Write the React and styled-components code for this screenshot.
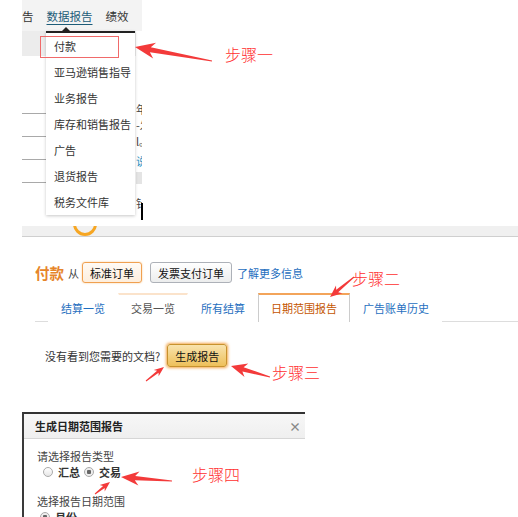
import React from 'react'
import styled, { createGlobalStyle } from 'styled-components'

const GlobalStyle = createGlobalStyle`
  html, body { margin: 0; padding: 0; background: #fff; }
  body {
    font-family: "Noto Sans CJK SC", "Noto Sans", "Liberation Sans", sans-serif;
    font-size: 11px;
    color: #333;
  }
`

const Page = styled.div`
  position: relative;
  width: 518px;
  height: 517px;
  overflow: hidden;
  background: #fff;
`

/* ---------- shot 1 : nav + dropdown ---------- */

const Shot1 = styled.div`
  position: relative;
  margin-left: 22px;
  width: 120px;
  height: 226px;
  display: flex;
  flex-direction: column;
`

const TopNav = styled.div`
  height: 31px;
  background: #f3f3f3;
  display: flex;
  align-items: center;
  gap: 13px;
  font-size: 11.5px;
  line-height: 16px;
  white-space: nowrap;
`

const NavItem = styled.span`
  color: ${p => (p.$active ? '#1d5c78' : '#333')};
  text-decoration: ${p => (p.$active ? 'underline' : 'none')};
  text-underline-offset: 3px;
`

const BackBody = styled.div`
  flex: 1;
  display: grid;
  grid-template-columns: 1fr 6px;
`

const BackLeft = styled.div`
  display: flex;
  flex-direction: column;
`

const GrayBand = styled.div`
  height: 25px;
  background: #ececec;
`

const Bullet = styled.div`
  height: 35px;
  padding-left: 21px;
  line-height: 30px;
  font-size: 10px;
  color: #444;
`

const BackRow = styled.div`
  height: 22px;
  border-bottom: 1px solid #a9a9a9;
  width: 24px;
`

const BackRight = styled.div`
  display: flex;
  flex-direction: column;
  padding-top: 70px;
  font-size: 11px;
  line-height: 16px;
  overflow: hidden;
  white-space: nowrap;
  color: #444;
`

const Frag = styled.span`
  height: ${p => p.$h || 16}px;
  color: ${p => p.$c || '#444'};
  background: ${p => p.$bg || 'transparent'};
  margin-top: ${p => p.$mt || 0}px;
`

const Cursor = styled.div`
  position: absolute;
  left: 119px;
  top: 203px;
  width: 2px;
  height: 17px;
  background: #000;
`

const Dropdown = styled.ul`
  position: absolute;
  left: 24px;
  top: 31px;
  width: 89px;
  margin: 0;
  padding: 0;
  list-style: none;
  background: #fff;
  border-top: 2px solid #222;
  box-shadow: 0 1px 3px rgba(0, 0, 0, 0.22);

  &::before {
    content: '';
    position: absolute;
    left: 16px;
    top: -6px;
    border: 4px solid transparent;
    border-bottom-color: #222;
    border-top: 0;
  }
`

const MenuItem = styled.li`
  height: 26px;
  line-height: 26px;
  padding-left: 8px;
  font-size: 11px;
  color: #333;
  white-space: nowrap;
`

const RedBox = styled.div`
  position: absolute;
  left: 18px;
  top: 36px;
  width: 77px;
  height: 20px;
  border: 1px solid #f06a6a;
`

/* ---------- shot 2 : payments header + tabs ---------- */

const Shot2 = styled.div`
  margin-left: 22px;
  display: flex;
  flex-direction: column;
`

const TopStrip = styled.div`
  position: relative;
  height: 10px;
  background: #f0f0f0;
  border-bottom: 1px solid #cfcfcf;
  overflow: hidden;
`

const Ring = styled.div`
  position: absolute;
  left: 51px;
  top: -14px;
  width: 18px;
  height: 18px;
  border: 3px solid #f6a623;
  border-radius: 50%;
`

const HeadRow = styled.div`
  display: flex;
  align-items: center;
  margin-top: 25px;
  padding-left: 13px;
  height: 21px;
  white-space: nowrap;
`

const Title = styled.span`
  font-size: 14.5px;
  font-weight: bold;
  color: #e6852a;
  margin-right: 4px;
`

const From = styled.span`
  font-size: 11px;
  color: #444;
  margin-right: 3px;
`

const OrderButton = styled.button`
  height: 21px;
  padding: 0 7px;
  margin-right: ${p => p.$mr || 0}px;
  font: inherit;
  font-size: 11px;
  color: #111;
  border-radius: 3px;
  border: 1px solid ${p => (p.$active ? '#f0a050' : '#adb1b8')};
  background: ${p => (p.$active ? 'linear-gradient(#fffaf4, #fdeedd)' : 'linear-gradient(#fff, #eceded)')};
  box-shadow: ${p => (p.$active ? '0 0 2px #f7c890' : 'none')};
  cursor: pointer;
`

const Link = styled.a`
  font-size: 11px;
  color: #1f6fc0;
  text-decoration: none;
`

const TabBar = styled.div`
  display: flex;
  margin-top: 12px;
  margin-left: 13px;
  padding-left: 13px;
  border-bottom: 1px solid #ddd;
`

const Tab = styled.div`
  height: 27px;
  line-height: 27px;
  padding: 0 12px;
  font-size: 11px;
  white-space: nowrap;
  color: ${p => (p.$active ? '#c45500' : p.$muted ? '#555' : '#1f6fc0')};
  border-top: 2px solid ${p => (p.$active ? '#f3a45a' : p.$hover ? '#fbe3cb' : 'transparent')};
  border-left: 1px solid ${p => (p.$active ? '#ccc' : 'transparent')};
  border-right: 1px solid ${p => (p.$active ? '#ccc' : 'transparent')};
  background: #fff;
  margin-bottom: -1px;
  margin-top: -2px;
`

/* ---------- shot 3 : generate report ---------- */

const Shot3 = styled.div`
  display: flex;
  align-items: center;
  gap: 7px;
  margin-top: 22px;
  padding-left: 45px;
  height: 23px;
`

const Hint = styled.span`
  font-size: 11px;
  color: #333;
`

const GenButton = styled.button`
  height: 23px;
  width: 60px;
  padding: 0;
  font: inherit;
  font-size: 11px;
  color: #111;
  border: 1px solid #c7922d;
  border-radius: 3px;
  background: linear-gradient(#f8e3ad, #eec05a);
  box-shadow: 0 0 3px 1px #f4a64a;
`

/* ---------- shot 4 : dialog ---------- */

const Dialog = styled.div`
  margin-top: 45px;
  margin-left: 22px;
  width: 281px;
  border-top: 2px solid #333;
  border-left: 2px solid #3a3a3a;
`

const DialogHead = styled.div`
  height: 24px;
  display: flex;
  align-items: center;
  justify-content: space-between;
  padding: 0 4px 0 11px;
  background: linear-gradient(#f7f7f7, #efefef);
  border-bottom: 1px solid #d6d6d6;
`

const DialogTitle = styled.span`
  font-size: 11px;
  font-weight: bold;
  color: #222;
`

const Close = styled.span`
  font-size: 12px;
  font-weight: bold;
  color: #888;
`

const DialogBody = styled.div`
  padding: 9px 0 0 13px;
  display: flex;
  flex-direction: column;
`

const Label = styled.div`
  font-size: 11px;
  line-height: 16px;
  color: #444;
  margin-top: ${p => p.$mt || 0}px;
`

const RadioRow = styled.div`
  display: flex;
  align-items: center;
  height: 16px;
  padding-left: 6px;
  font-size: 11px;
  font-weight: bold;
  color: #333;
`

const Radio = styled.span`
  width: 8px;
  height: 8px;
  border-radius: 50%;
  border: 1px solid #aaa;
  background: ${p => (p.$on ? 'radial-gradient(circle, #666 0 2px, #eee 2.5px)' : 'linear-gradient(#fff, #e6e6e6)')};
  margin-right: 5px;
  margin-left: ${p => p.$ml || 0}px;
`

/* ---------- annotations ---------- */

const Overlay = styled.svg`
  position: absolute;
  left: 0;
  top: 0;
  pointer-events: none;
`

const Note = styled.span`
  position: absolute;
  left: ${p => p.$x}px;
  top: ${p => p.$y}px;
  font-size: 16px;
  line-height: 18px;
  font-weight: 300;
  color: #ff2f2f;
  white-space: nowrap;
`

const arrowPoints = (tx, ty, sx, sy, head, hw) => {
  const dx = sx - tx
  const dy = sy - ty
  const len = Math.hypot(dx, dy)
  const ux = dx / len
  const uy = dy / len
  const p = (a, b) => `${(tx + ux * a - uy * b).toFixed(1)},${(ty + uy * a + ux * b).toFixed(1)}`
  const shaft = hw * 0.32
  return [p(0, 0), p(head, hw), p(head * 0.78, shaft), p(len, 0.5), p(len, -0.5), p(head * 0.78, -shaft), p(head, -hw)].join(' ')
}

const arrows = [
  [135, 47, 212, 61, 20, 8],
  [330, 297, 354, 277, 12, 5],
  [231, 366, 270, 377, 16, 7],
  [164, 367, 146, 381, 10, 4],
  [121, 477, 172, 481, 18, 7],
  [110, 482, 95, 494, 10, 4],
]

const menu = ['付款', '亚马逊销售指导', '业务报告', '库存和销售报告', '广告', '退货报告', '税务文件库']
const tabs = [
  { label: '结算一览' },
  { label: '交易一览', muted: true, hover: true },
  { label: '所有结算' },
  { label: '日期范围报告', active: true },
  { label: '广告账单历史' },
]

export default function App() {
  return (
    <Page>
      <GlobalStyle />

      <Shot1>
        <TopNav>
          <NavItem>告</NavItem>
          <NavItem $active>数据报告</NavItem>
          <NavItem>绩效</NavItem>
        </TopNav>
        <BackBody>
          <BackLeft>
            <GrayBand />
            <Bullet>•</Bullet>
            <BackRow />
            <BackRow />
            <BackRow />
            <BackRow />
          </BackLeft>
          <BackRight>
            <Frag>年</Frag>
            <Frag>-发</Frag>
            <Frag>l。</Frag>
            <Frag $c="#1f8fc0" $mt={4}>说</Frag>
            <Frag $bg="#e4e4e4" $h={12} $mt={3}> </Frag>
            <Frag $mt={11}>针</Frag>
          </BackRight>
        </BackBody>
        <Dropdown>
          {menu.map(m => (
            <MenuItem key={m}>{m}</MenuItem>
          ))}
        </Dropdown>
        <RedBox />
        <Cursor />
      </Shot1>

      <Shot2>
        <TopStrip>
          <Ring />
        </TopStrip>
        <HeadRow>
          <Title>付款</Title>
          <From>从</From>
          <OrderButton $active $mr={8}>标准订单</OrderButton>
          <OrderButton $mr={5}>发票支付订单</OrderButton>
          <Link>了解更多信息</Link>
        </HeadRow>
        <TabBar>
          {tabs.map(t => (
            <Tab key={t.label} $active={t.active} $muted={t.muted} $hover={t.hover}>
              {t.label}
            </Tab>
          ))}
        </TabBar>
      </Shot2>

      <Shot3>
        <Hint>没有看到您需要的文档?</Hint>
        <GenButton>生成报告</GenButton>
      </Shot3>

      <Dialog>
        <DialogHead>
          <DialogTitle>生成日期范围报告</DialogTitle>
          <Close>×</Close>
        </DialogHead>
        <DialogBody>
          <Label>请选择报告类型</Label>
          <RadioRow>
            <Radio />
            汇总
            <Radio $on $ml={4} />
            交易
          </RadioRow>
          <Label $mt={13}>选择报告日期范围</Label>
          <RadioRow>
            <Radio $on $ml={-3} />
            月份
          </RadioRow>
        </DialogBody>
      </Dialog>

      <Overlay width="518" height="517">
        {arrows.map((a, i) => (
          <polygon key={i} points={arrowPoints(...a)} fill="#f33a3a" />
        ))}
      </Overlay>
      <Note $x={225} $y={45}>步骤一</Note>
      <Note $x={352} $y={269}>步骤二</Note>
      <Note $x={272} $y={363}>步骤三</Note>
      <Note $x={192} $y={465}>步骤四</Note>
    </Page>
  )
}
